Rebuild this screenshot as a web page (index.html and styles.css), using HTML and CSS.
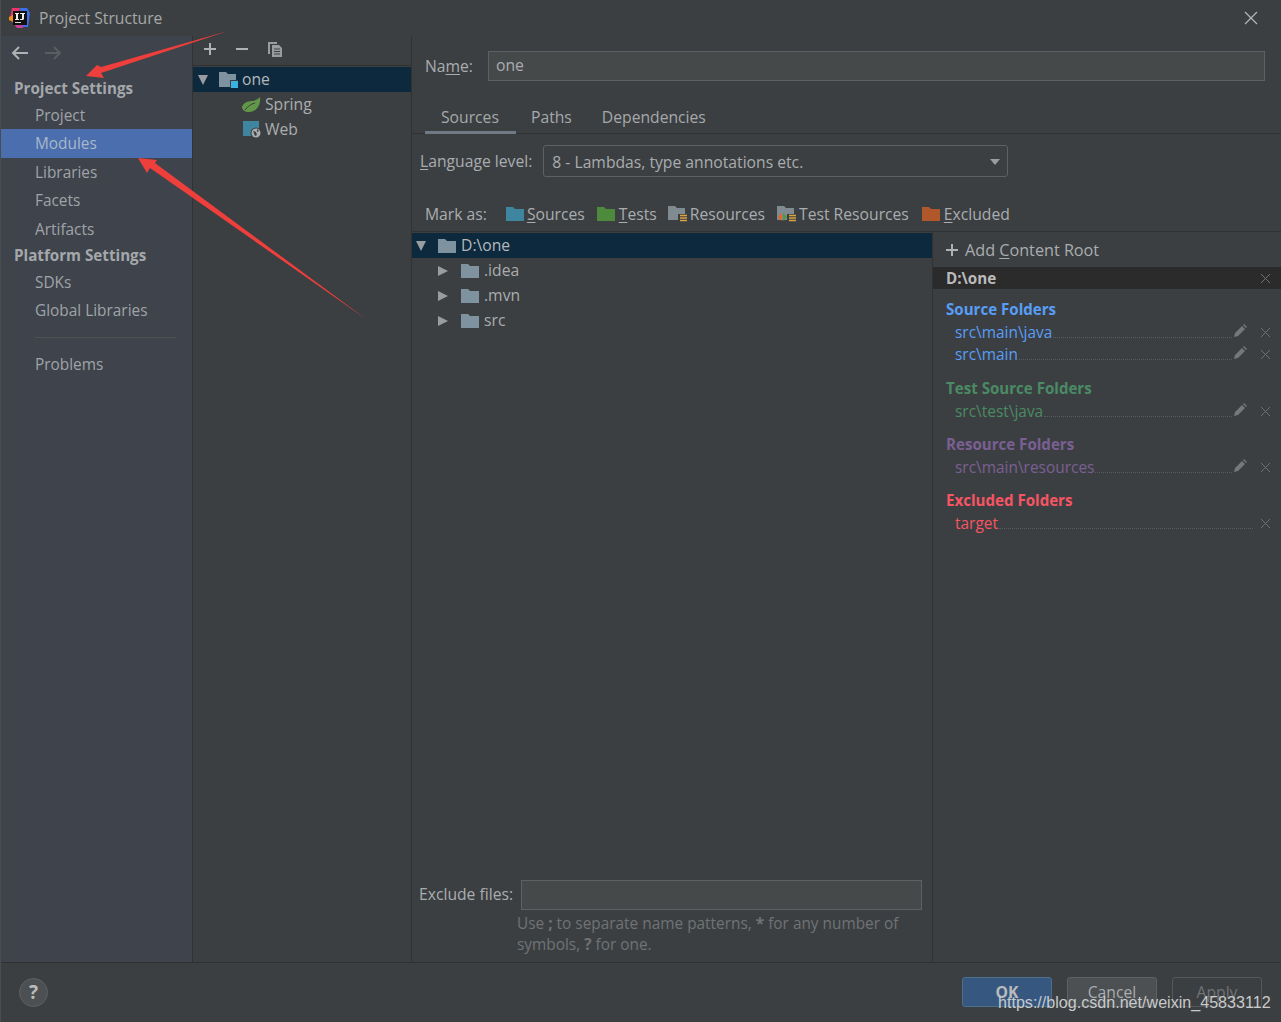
FILE: index.html
```html
<!DOCTYPE html>
<html lang="en">
<head>
<meta charset="UTF-8">
<title>Project Structure</title>
<link rel="stylesheet" href="styles.css">
</head>
<body>
<div class="dialog">

  <header class="titlebar">
    <svg class="app-logo" width="21" height="20" viewBox="0 0 21 20">
      <path d="M3 0h8L9 10H1z" fill="#e8376b"/>
      <path d="M11 0h7l3 5-2 14h-7z" fill="#3d6fe8"/>
      <path d="M0 9l4-2v7l-4-2z" fill="#f58a1f"/>
      <path d="M3 14l5 6h6v-3z" fill="#c8409a"/>
      <rect x="4" y="3" width="14" height="14" fill="#111"/>
      <rect x="6" y="14" width="6" height="1" fill="#ddd"/>
      <path d="M6 5h4v1H9v5h1v1H6v-1h1V6H6zM11 5h5v1h-1v5l-1 1h-3v-1h2V6h-2z" fill="#eee"/>
    </svg>
    <span class="title">Project Structure</span>
    <svg class="close-x" width="14" height="14" viewBox="0 0 14 14"><path d="M1 1l12 12M13 1L1 13" stroke="#b4b7b9" stroke-width="1.2"/></svg>
  </header>

  <div class="body">
    <nav class="sidebar">
      <div class="nav-arrows">
        <svg width="18" height="14" viewBox="0 0 18 14"><path d="M17 7H2M8 1L2 7l6 6" fill="none" stroke="#afb1b3" stroke-width="2"/></svg>
        <svg width="18" height="14" viewBox="0 0 18 14"><path d="M1 7h15M10 1l6 6-6 6" fill="none" stroke="#5b5e60" stroke-width="2"/></svg>
      </div>
      <div class="side-title">Project Settings</div>
      <div class="side-item">Project</div>
      <div class="side-item selected">Modules</div>
      <div class="side-item">Libraries</div>
      <div class="side-item">Facets</div>
      <div class="side-item">Artifacts</div>
      <div class="side-title">Platform Settings</div>
      <div class="side-item">SDKs</div>
      <div class="side-item">Global Libraries</div>
      <div class="side-line"></div>
      <div class="side-item">Problems</div>
    </nav>

    <section class="modules">
      <div class="mini-toolbar">
        <svg width="14" height="14" viewBox="0 0 14 14"><path d="M7 1v12M1 7h12" stroke="#afb1b3" stroke-width="2"/></svg>
        <svg width="14" height="14" viewBox="0 0 14 14"><path d="M1 7h12" stroke="#afb1b3" stroke-width="2"/></svg>
        <svg width="16" height="17" viewBox="0 0 16 17"><path d="M1 1h9v2H3v10H1z" fill="#9a9da0"/><path d="M5 4h7l3 3v9H5z" fill="#9a9da0"/><path d="M7 8h6M7 10.500h6M7 13h6" stroke="#3c3f41"/></svg>
      </div>
      <div class="tree-row selected-row module-row">
        <span class="arrow-down"></span>
        <svg class="module-icon" width="19" height="17" viewBox="0 0 19 17"><path d="M0 1h7l2 2h8v13H0z" fill="#7f929f"/><rect x="11" y="9" width="8" height="8" fill="#3c3f41"/><rect x="12" y="10" width="7" height="7" fill="#3bb1e0"/></svg>
        <span class="row-text">one</span>
      </div>
      <div class="tree-row facet-row">
        <svg width="19" height="16" viewBox="0 0 19 16"><path d="M18 0c1 7-3 15-11 15C3 15 0 13 0 10c1-4 6-6 10-6 3 0 6-2 8-4z" fill="#629749"/><path d="M3 13c3-4 6-6 10-7" stroke="#3c3f41" stroke-width="1" fill="none"/></svg>
        <span class="row-text">Spring</span>
      </div>
      <div class="tree-row facet-row web-row">
        <svg width="19" height="18" viewBox="0 0 19 18"><rect x="0" y="0" width="16" height="15" fill="#3e86a0"/><circle cx="13" cy="12" r="5.500" fill="#3c3f41"/><circle cx="13" cy="12" r="4.500" fill="#a9acae"/><path d="M10 10l3 1 1 3-2 1zM14 8l2 2-2 1z" fill="#3c3f41"/></svg>
        <span class="row-text">Web</span>
      </div>
    </section>

    <main class="content">
      <div class="name-row">
        <label class="lbl">Na<u>m</u>e:</label>
        <div class="text-field">one</div>
      </div>
      <div class="tabs">
        <span class="tab active">Sources</span>
        <span class="tab">Paths</span>
        <span class="tab">Dependencies</span>
      </div>
      <div class="lang-row">
        <label class="lbl"><u>L</u>anguage level:</label>
        <div class="combo"><span>8 - Lambdas, type annotations etc.</span><i class="combo-arrow"></i></div>
      </div>
      <div class="mark-row">
        <span class="lbl mark-label">Mark as:</span>
        <span class="mark">
          <svg width="18" height="14" viewBox="0 0 18 14"><path d="M0 0h7l2 2h9v12H0z" fill="#3e86a0"/></svg>
          <span><u>S</u>ources</span>
        </span>
        <span class="mark mark-tests">
          <svg width="18" height="14" viewBox="0 0 18 14"><path d="M0 0h7l2 2h9v12H0z" fill="#4e8a3c"/></svg>
          <span><u>T</u>ests</span>
        </span>
        <span class="mark">
          <svg width="19" height="17" viewBox="0 0 19 17"><path d="M0 0h7l2 2h8v12H0z" fill="#7f8b91"/><rect x="10" y="8" width="9" height="9" fill="#3c3f41"/><path d="M12 9.500h7M12 12h7M12 14.500h7" stroke="#d9a343" stroke-width="1.500"/></svg>
          <span>Resources</span>
        </span>
        <span class="mark">
          <svg width="19" height="17" viewBox="0 0 19 17"><path d="M0 0h7l2 2h8v12H0z" fill="#7f8b91"/><rect x="10" y="8" width="9" height="9" fill="#3c3f41"/><path d="M12 9.500h7M12 12h7M12 14.500h7" stroke="#d9a343" stroke-width="1.500"/><path d="M5 7l-4 4 4 4z" fill="#e8622c"/><path d="M6 7l4 4-4 4z" fill="#4e9a3c"/></svg>
          <span>Test Resources</span>
        </span>
        <span class="mark mark-excluded">
          <svg width="18" height="14" viewBox="0 0 18 14"><path d="M0 0h7l2 2h9v12H0z" fill="#b0582c"/></svg>
          <span><u>E</u>xcluded</span>
        </span>
      </div>

      <div class="split">
        <div class="folders">
          <div class="folder-tree">
            <div class="tree-row selected-row">
              <span class="arrow-down"></span>
              <svg class="folder" width="18" height="14" viewBox="0 0 18 14"><path d="M0 0h7l2 2h9v12H0z" fill="#7f929f"/></svg>
              <span class="row-text">D:\one</span>
            </div>
            <div class="tree-row child-row"><span class="arrow-right"></span><svg class="folder" width="18" height="14" viewBox="0 0 18 14"><path d="M0 0h7l2 2h9v12H0z" fill="#7f929f"/></svg><span class="row-text">.idea</span></div>
            <div class="tree-row child-row"><span class="arrow-right"></span><svg class="folder" width="18" height="14" viewBox="0 0 18 14"><path d="M0 0h7l2 2h9v12H0z" fill="#7f929f"/></svg><span class="row-text">.mvn</span></div>
            <div class="tree-row child-row"><span class="arrow-right"></span><svg class="folder" width="18" height="14" viewBox="0 0 18 14"><path d="M0 0h7l2 2h9v12H0z" fill="#7f929f"/></svg><span class="row-text">src</span></div>
          </div>
          <div class="exclude-row">
            <label class="lbl">Exclude files:</label>
            <div class="text-field exclude-field"></div>
          </div>
          <p class="hint">Use <b>;</b> to separate name patterns, <b>*</b> for any number of<br>symbols, <b>?</b> for one.</p>
        </div>

        <aside class="roots">
          <div class="add-root">
            <svg width="14" height="14" viewBox="0 0 14 14"><path d="M7 1v12M1 7h12" stroke="#afb1b3" stroke-width="2"/></svg>
            <span>Add <u>C</u>ontent Root</span>
          </div>
          <div class="root-head"><span>D:\one</span><svg class="rm" width="11" height="11" viewBox="0 0 11 11"><path d="M1 1l9 9M10 1l-9 9" stroke="#6e7072"/></svg></div>

          <div class="group blue first">
            <div class="group-title">Source Folders</div>
            <div class="path"><span>src\main\java</span><i class="dots"></i><svg class="pen" width="13" height="13" viewBox="0 0 13 13"><path d="M0 13l1-4 7-7 3 3-7 7zM9 1l1-1 3 3-1 1z" fill="#75787a"/></svg><svg class="rm" width="11" height="11" viewBox="0 0 11 11"><path d="M1 1l9 9M10 1l-9 9" stroke="#6e7072"/></svg></div>
            <div class="path"><span>src\main</span><i class="dots"></i><svg class="pen" width="13" height="13" viewBox="0 0 13 13"><path d="M0 13l1-4 7-7 3 3-7 7zM9 1l1-1 3 3-1 1z" fill="#75787a"/></svg><svg class="rm" width="11" height="11" viewBox="0 0 11 11"><path d="M1 1l9 9M10 1l-9 9" stroke="#6e7072"/></svg></div>
          </div>
          <div class="group green">
            <div class="group-title">Test Source Folders</div>
            <div class="path"><span>src\test\java</span><i class="dots"></i><svg class="pen" width="13" height="13" viewBox="0 0 13 13"><path d="M0 13l1-4 7-7 3 3-7 7zM9 1l1-1 3 3-1 1z" fill="#75787a"/></svg><svg class="rm" width="11" height="11" viewBox="0 0 11 11"><path d="M1 1l9 9M10 1l-9 9" stroke="#6e7072"/></svg></div>
          </div>
          <div class="group purple">
            <div class="group-title">Resource Folders</div>
            <div class="path"><span>src\main\resources</span><i class="dots"></i><svg class="pen" width="13" height="13" viewBox="0 0 13 13"><path d="M0 13l1-4 7-7 3 3-7 7zM9 1l1-1 3 3-1 1z" fill="#75787a"/></svg><svg class="rm" width="11" height="11" viewBox="0 0 11 11"><path d="M1 1l9 9M10 1l-9 9" stroke="#6e7072"/></svg></div>
          </div>
          <div class="group red">
            <div class="group-title">Excluded Folders</div>
            <div class="path"><span>target</span><i class="dots"></i><svg class="rm" width="11" height="11" viewBox="0 0 11 11"><path d="M1 1l9 9M10 1l-9 9" stroke="#6e7072"/></svg></div>
          </div>
        </aside>
      </div>
    </main>
  </div>

  <footer class="footer">
    <div class="help">?</div>
    <div class="buttons">
      <button class="btn primary">OK</button>
      <button class="btn">Cancel</button>
      <button class="btn disabled">Apply</button>
    </div>
  </footer>

  <!-- red annotation arrows drawn on top of the screenshot -->
  <svg class="annotations" width="1281" height="1022" viewBox="0 0 1281 1022">
    <polygon points="228,31 101,67 97,65 86,76 104,78 101,73" fill="#ee3f3c"/>
    <polygon points="366,319 155,163 157,160 138,158 147,173 150,168" fill="#ee3f3c"/>
  </svg>
  <div class="watermark">https://blog.csdn.net/weixin_45833112</div>
</div>
</body>
</html>
```

FILE: styles.css
```css
* {
  box-sizing: border-box;
}
html, body {
  margin: 0;
  padding: 0;
}
body {
  background-color: #3c3f41;
  font-family: "Open Sans", "Noto Sans", sans-serif;
  font-size: 15.700px;
  color: #a9adb0;
}
.dialog {
  position: relative;
  width: 1281px;
  height: 1022px;
  overflow: hidden;
  display: flex;
  flex-direction: column;
  background-color: #3c3f41;
  border-left: 1px solid #4a4d4f;
}
svg {
  flex: none;
  display: block;
}
u {
  text-underline-offset: 2px;
}

/* title bar */
.titlebar {
  height: 36px;
  flex: none;
  display: flex;
  align-items: center;
  padding: 0 23px 0 8px;
}
.title {
  margin-left: 9px;
  color: #a5a8aa;
}
.close-x {
  margin-left: auto;
}

/* main area */
.body {
  flex: 1;
  display: flex;
  min-height: 0;
}
.sidebar {
  width: 191px;
  flex: none;
  background-color: #3e434c;
  border-right: 1px solid #323232;
  box-sizing: content-box;
}
.nav-arrows {
  height: 40px;
  display: flex;
  align-items: center;
  gap: 15px;
  padding: 0 0 6px 10px;
}
.side-title {
  height: 24.500px;
  line-height: 24px;
  padding-left: 13px;
  font-size: 15.200px;
  font-weight: 700;
  color: #a5a8ab;
}
.side-item {
  height: 28.500px;
  line-height: 30px;
  padding-left: 34px;
  font-size: 15.400px;
  color: #a0a4a8;
}
.side-item.selected {
  background-color: #4b6eaf;
  color: #a9b7c9;
}
.side-line {
  height: 1px;
  margin: 12px 16px 12px 34px;
  background-color: #4e5254;
}

.modules {
  width: 219px;
  flex: none;
  border-right: 1px solid #323232;
}
.mini-toolbar {
  height: 30px;
  display: flex;
  align-items: center;
  gap: 18px;
  padding: 0 0 3px 10px;
  border-bottom: 1px solid #323232;
}
.tree-row {
  height: 25px;
  display: flex;
  align-items: center;
  color: #a9adb0;
}
.row-text {
  margin-top: -2px;
}
.selected-row {
  background-color: #0d293e;
  color: #b4b8bb;
  margin-top: 1px;
}
.arrow-down {
  width: 0;
  height: 0;
  margin-left: 4px;
  border-left: 5.500px solid transparent;
  border-right: 5.500px solid transparent;
  border-top: 10px solid #9a9da0;
}
.arrow-right {
  width: 0;
  height: 0;
  border-top: 5.500px solid transparent;
  border-bottom: 5.500px solid transparent;
  border-left: 10px solid #9a9da0;
}
.module-row .arrow-down {
  margin-left: 5px;
}
.module-icon {
  margin-left: 11px;
  margin-right: 4px;
}
.facet-row {
  padding-left: 49px;
  gap: 4px;
}
.web-row {
  padding-left: 50px;
  gap: 3px;
}

/* right side */
.content {
  flex: 1;
  min-width: 0;
  display: flex;
  flex-direction: column;
}
.lbl {
  color: #a9adb0;
  white-space: nowrap;
}
.name-row {
  display: flex;
  align-items: center;
  padding: 15px 16px 0 13px;
  gap: 15px;
}
.text-field {
  height: 30px;
  line-height: 27px;
  padding-left: 7px;
  flex: 1;
  background-color: #45494a;
  border: 1px solid #5e6163;
  color: #a9adb0;
}
.tabs {
  height: 38px;
  margin-top: 15px;
  padding-left: 13px;
  display: flex;
  border-bottom: 1px solid #323232;
}
.tab {
  padding: 0 15px;
  line-height: 42px;
  color: #a5a9ac;
}
.tab.active {
  border-bottom: 3px solid #6f7a85;
  height: 38px;
  width: 91px;
  padding-left: 16px;
  white-space: nowrap;
}
.lang-row {
  display: flex;
  align-items: center;
  padding: 11px 0 0 8px;
  gap: 11px;
}
.combo {
  width: 465px;
  height: 32px;
  display: flex;
  align-items: center;
  justify-content: space-between;
  padding: 1px 7px 0 8px;
  background-color: #3c3f41;
  border: 1px solid #5e6163;
  border-radius: 3px;
}
.combo-arrow {
  width: 0;
  height: 0;
  border-left: 5.500px solid transparent;
  border-right: 5.500px solid transparent;
  border-top: 6px solid #9a9da0;
}
.mark-row {
  height: 55px;
  display: flex;
  align-items: flex-end;
  padding: 0 0 6px 13px;
  border-bottom: 1px solid #323232;
}
.mark-label {
  margin-right: 19px;
}
.mark {
  display: flex;
  align-items: center;
  gap: 3px;
  margin-right: 12px;
}
.mark-tests {
  gap: 4px;
  margin-right: 11px;
}
.mark-excluded {
  gap: 4px;
  margin-left: 1px;
}
.split {
  flex: 1;
  display: flex;
  min-height: 0;
}
.folders {
  width: 520px;
  flex: none;
  display: flex;
  flex-direction: column;
  border-right: 1px solid #323232;
  box-sizing: content-box;
}
.folder-tree {
  flex: 1;
}
.folder {
  margin-left: 12px;
  margin-right: 5px;
}
.child-row {
  padding-left: 26px;
}
.child-row .folder {
  margin-left: 13px;
}
.exclude-row {
  display: flex;
  align-items: center;
  justify-content: space-between;
  padding: 0 10px 0 7px;
}
.exclude-row .lbl {
  margin-top: -2px;
}
.exclude-field {
  flex: none;
  width: 401px;
}
.hint {
  margin: 3px 0 7px 105px;
  font-size: 15.400px;
  line-height: 21px;
  color: #6f7376;
}

.roots {
  flex: 1;
  min-width: 0;
  padding-right: 10px;
}
.add-root {
  height: 35px;
  display: flex;
  align-items: center;
  gap: 6px;
  padding-left: 12px;
  font-size: 16.200px;
}
.root-head {
  height: 22px;
  margin-right: -10px;
  padding: 0 10px 0 13px;
  display: flex;
  align-items: center;
  justify-content: space-between;
  background-color: #2b2b2b;
  font-size: 15.200px;
  font-weight: 700;
  color: #bbbbbb;
}
.group {
  margin-top: 11px;
}
.group.first {
  margin-top: 9px;
}
.group.green {
  margin-top: 12px;
}
.group-title {
  height: 23px;
  line-height: 22px;
  padding-left: 13px;
  font-size: 15.100px;
  font-weight: 700;
}
.path {
  height: 22px;
  padding-left: 22px;
  display: flex;
  align-items: center;
  font-size: 15.450px;
}
.dots {
  flex: 1;
  align-self: flex-end;
  margin: 0 0 5px 1px;
  border-bottom: 1px dotted #5a5d5f;
}
.pen {
  margin: 0 6px 3px 2px;
}
.path .rm {
  margin-left: 7px;
}
.blue { color: #589df6; }
.green { color: #4a8a64; }
.purple { color: #7a5f94; }
.red { color: #f75464; }

/* footer */
.footer {
  height: 60px;
  flex: none;
  display: flex;
  align-items: flex-start;
  justify-content: space-between;
  padding: 14px 19px 0 18px;
  border-top: 1px solid #2f3133;
}
.help {
  width: 29px;
  height: 29px;
  margin-top: 1px;
  border-radius: 50%;
  background-color: #4c5052;
  border: 1px solid #5e6163;
  color: #bbbbbb;
  font-weight: 700;
  font-size: 19px;
  line-height: 26px;
  text-align: center;
}
.buttons {
  display: flex;
  gap: 15px;
}
.btn {
  width: 90px;
  height: 30px;
  border: 1px solid #5e6163;
  border-radius: 3px;
  background-color: #4c5052;
  color: #a9adb0;
  font-family: inherit;
  font-size: 15.700px;
  padding: 0;
}
.btn.primary {
  background-color: #365880;
  border-color: #4c708c;
  color: #bbbbbb;
  font-weight: 700;
}
.btn.disabled {
  background-color: #3c3f41;
  border-color: #555859;
  color: #6f7376;
}

/* overlays */
.annotations {
  position: absolute;
  left: -1px;
  top: 0;
  pointer-events: none;
}
.watermark {
  position: absolute;
  left: 997px;
  top: 993px;
  font-family: "Liberation Sans", Arial, sans-serif;
  font-size: 16.100px;
  color: #c8cacb;
  white-space: nowrap;
}
```
